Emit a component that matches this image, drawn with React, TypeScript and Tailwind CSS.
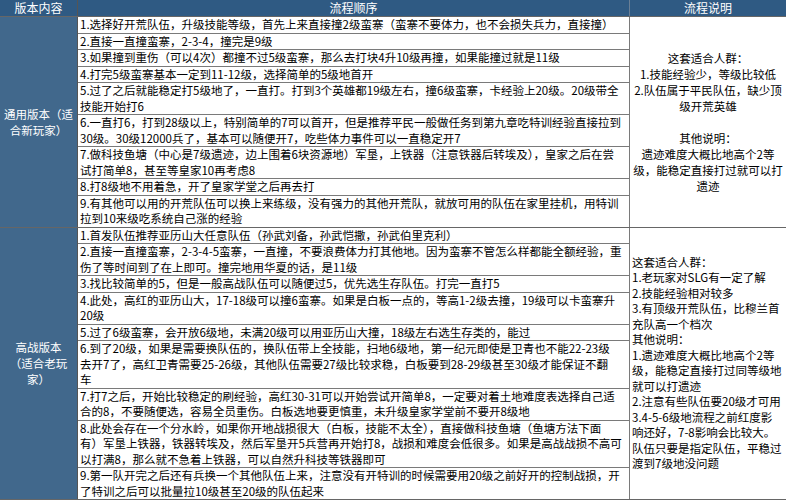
import React from "react";

const sec1: string[][] = [
  ["1.选择好开荒队伍，升级技能等级，首先上来直接撞2级蛮寨（蛮寨不要体力，也不会损失兵力，直接撞）"],
  ["2.直接一直撞蛮寨，2-3-4，撞完是9级"],
  ["3.如果撞到重伤（可以4次）都撞不过5级蛮寨，那么去打块4升10级再撞，如果能撞过就是11级"],
  ["4.打完5级蛮寨基本一定到11-12级，选择简单的5级地首开"],
  ["5.过了之后就能稳定打5级地了，一直打。打到3个英雄都19级左右，撞6级蛮寨，卡经验上20级。20级带全", "技能开始打6"],
  ["6.一直打6，打到28级以上，特别简单的7可以首开，但是推荐平民一般做任务到第九章吃特训经验直接拉到", "30级。30级12000兵了，基本可以随便开7，吃些体力事件可以一直稳定开7"],
  ["7.做科技鱼塘（中心是7级遗迹，边上围着6块资源地）军垦，上铁器（注意铁器后转埃及），皇家之后在尝", "试打简单8，甚至等皇家10再考虑8"],
  ["8.打8级地不用着急，开了皇家学堂之后再去打"],
  ["9.有其他可以用的开荒队伍可以换上来练级，没有强力的其他开荒队，就放可用的队伍在家里挂机，用特训", "拉到10来级吃系统自己涨的经验"],
];

const sec2: string[][] = [
  ["1.首发队伍推荐亚历山大任意队伍（孙武刘备，孙武恺撒，孙武伯里克利）"],
  ["2.直接一直撞蛮寨，2-3-4-5蛮寨，一直撞，不要浪费体力打其他地。因为蛮寨不管怎么样都能全额经验，重", "伤了等时间到了在上即可。撞完地用华夏的话，是11级"],
  ["3.找比较简单的5，但是一般高战队伍可以随便过5，优先选生存队伍。打完一直打5"],
  ["4.此处，高红的亚历山大，17-18级可以撞6蛮寨。如果是白板一点的，等高1-2级去撞，19级可以卡蛮寨升", "20级"],
  ["5.过了6级蛮寨，会开放6级地，未满20级可以用亚历山大撞，18级左右选生存类的，能过"],
  ["6.到了20级，如果是需要换队伍的，换队伍带上全技能，扫地6级地，第一纪元即使是卫青也不能22-23级", "去开7了，高红卫青需要25-26级，其他队伍需要27级比较求稳，白板要到28-29级甚至30级才能保证不翻", "车"],
  ["7.打7之后，开始比较稳定的刷经验，高红30-31可以开始尝试开简单8，一定要对着土地难度表选择自己适", "合的8，不要随便选，容易全员重伤。白板选地要更慎重，未升级皇家学堂前不要开8级地"],
  ["8.此处会存在一个分水岭，如果你开地战损很大（白板，技能不太全），直接做科技鱼塘（鱼塘方法下面", "有）军垦上铁器，铁器转埃及，然后军垦开5兵营再开始打8，战损和难度会低很多。如果是高战战损不高可", "以打满8，那么就不急着上铁器，可以自然升科技等铁器即可"],
  ["9.第一队开完之后还有兵换一个其他队伍上来，注意没有开特训的时候需要用20级之前好开的控制战损，开", "了特训之后可以批量拉10级甚至20级的队伍起来"],
];

const note1 = [
  "这套适合人群：",
  "1.技能经验少，等级比较低",
  "2.队伍属于平民队伍，缺少顶",
  "级开荒英雄",
  "\u00a0",
  "其他说明：",
  "遗迹难度大概比地高个2等",
  "级，能稳定直接打过就可以打",
  "遗迹",
];

const note2 = [
  "这套适合人群：",
  "1.老玩家对SLG有一定了解",
  "2.技能经验相对较多",
  "3.有顶级开荒队伍，比穆兰首",
  "充队高一个档次",
  "其他说明：",
  "1.遗迹难度大概比地高个2等",
  "级，能稳定直接打过同等级地",
  "就可以打遗迹",
  "2.注意有些队伍要20级才可用",
  "3.4-5-6级地流程之前红度影",
  "响还好，7-8影响会比较大。",
  "队伍只要是指定队伍，平稳过",
  "渡到7级地没问题",
];

function Rows({ rows }: { rows: string[][] }) {
  return (
    <div className="flex-1 flex flex-col">
      {rows.map((r, i) => (
        <div
          key={i}
          className={
            "px-[2px] whitespace-nowrap overflow-hidden " +
            (i === 0 ? "" : "border-t border-[#7a7a7a]")
          }
        >
          {r.map((l, j) => (
            <div key={j} className="h-[15.5px] leading-[15.5px]">
              {l}
            </div>
          ))}
        </div>
      ))}
    </div>
  );
}

function Section({
  label,
  rows,
  note,
  center,
}: {
  label: string[];
  rows: string[][];
  note: string[];
  center: boolean;
}) {
  return (
    <div className="flex border-t border-[#666666]">
      <div className="w-[78px] shrink-0 bg-[#41688c] text-white flex flex-col items-center justify-center text-center border-r border-[#555555]">
        {label.map((l, i) => (
          <div key={i} className="leading-[16px]">
            {l}
          </div>
        ))}
      </div>
      <Rows rows={rows} />
      <div
        className={
          "w-[157px] shrink-0 border-l border-[#7a7a7a] flex flex-col justify-center whitespace-nowrap " +
          (center ? "items-center text-center" : "items-start pl-[2px]")
        }
      >
        {note.map((l, i) => (
          <div key={i} className={center ? "leading-[16px]" : "leading-[15.5px]"}>
            {l}
          </div>
        ))}
      </div>
    </div>
  );
}

export default function App() {
  return (
    <div
      className="w-[786px] h-[500px] bg-white overflow-hidden text-[11.5px] text-black"
      style={{ fontFamily: '"Noto Sans CJK SC", "Noto Sans", sans-serif' }}
    >
      <div className="flex h-[16px] bg-[#2f5a83] text-white leading-[16px] text-[12px]">
        <div className="w-[78px] shrink-0 text-center border-r border-[#555555]">版本内容</div>
        <div className="flex-1 text-center">流程顺序</div>
        <div className="w-[157px] shrink-0 text-center border-l border-[#6a7f95]">流程说明</div>
      </div>
      <Section label={["通用版本（适", "合新玩家）"]} rows={sec1} note={note1} center />
      <Section label={["高战版本", "（适合老玩", "家）"]} rows={sec2} note={note2} center={false} />
      <div className="border-t border-[#666666]" />
    </div>
  );
}
